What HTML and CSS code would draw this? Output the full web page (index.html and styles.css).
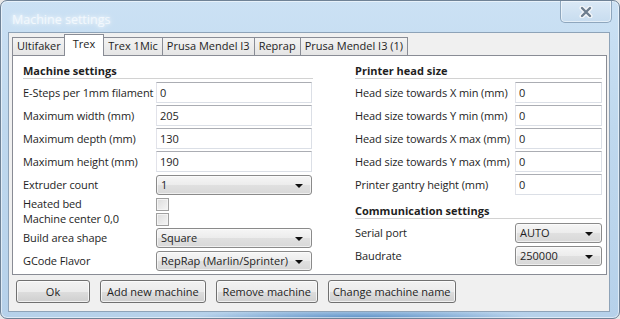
FILE: index.html
```html
<!DOCTYPE html>
<html lang="en">
<head>
    <meta charset="UTF-8">
    <title>Machine settings</title>
    <link rel="stylesheet" href="styles.css">
</head>
<body>
    <div class="window">
        <div class="titlebar">
            <span class="title">Machine settings</span>
            <div class="close-button">
                <svg width="14" height="12" viewBox="0 0 14 12">
                    <path d="M3 2 L11 10 M11 2 L3 10" stroke="#f4f7fa" stroke-width="5" stroke-linecap="round"/>
                    <path d="M3 2 L11 10 M11 2 L3 10" stroke="#6d7d8e" stroke-width="2.4" stroke-linecap="round"/>
                </svg>
            </div>
        </div>

        <div class="client">
            <div class="tabs">
                <div class="tab">Ultifaker</div>
                <div class="tab active">Trex</div>
                <div class="tab">Trex 1Mic</div>
                <div class="tab">Prusa Mendel I3</div>
                <div class="tab">Reprap</div>
                <div class="tab">Prusa Mendel I3 (1)</div>
            </div>

            <div class="panel">
                <div class="column column-left">
                    <div class="section-title">Machine settings</div>
                    <div class="row"><label>E-Steps per 1mm filament</label><input class="field" type="text" value="0"></div>
                    <div class="row"><label>Maximum width (mm)</label><input class="field" type="text" value="205"></div>
                    <div class="row"><label>Maximum depth (mm)</label><input class="field" type="text" value="130"></div>
                    <div class="row"><label>Maximum height (mm)</label><input class="field" type="text" value="190"></div>
                    <div class="row"><label>Extruder count</label><div class="combo">1</div></div>
                    <div class="row row-check"><label>Heated bed</label><span class="checkbox"></span></div>
                    <div class="row row-check"><label>Machine center 0,0</label><span class="checkbox"></span></div>
                    <div class="row"><label>Build area shape</label><div class="combo">Square</div></div>
                    <div class="row"><label>GCode Flavor</label><div class="combo">RepRap (Marlin/Sprinter)</div></div>
                </div>

                <div class="column column-right">
                    <div class="section-title">Printer head size</div>
                    <div class="row"><label>Head size towards X min (mm)</label><input class="field" type="text" value="0"></div>
                    <div class="row"><label>Head size towards Y min (mm)</label><input class="field" type="text" value="0"></div>
                    <div class="row"><label>Head size towards X max (mm)</label><input class="field" type="text" value="0"></div>
                    <div class="row"><label>Head size towards Y max (mm)</label><input class="field" type="text" value="0"></div>
                    <div class="row"><label>Printer gantry height (mm)</label><input class="field" type="text" value="0"></div>

                    <div class="section-title section-second">Communication settings</div>
                    <div class="row"><label>Serial port</label><div class="combo">AUTO</div></div>
                    <div class="row"><label>Baudrate</label><div class="combo">250000</div></div>
                </div>
            </div>

            <div class="buttons">
                <button class="btn btn-ok">Ok</button>
                <button class="btn">Add new machine</button>
                <button class="btn">Remove machine</button>
                <button class="btn btn-narrow">Change machine name</button>
            </div>
        </div>
    </div>
</body>
</html>
```

FILE: styles.css
```css
* {
    margin: 0;
    padding: 0;
    box-sizing: border-box;
}

body {
    font-family: 'Open Sans', 'Noto Sans', sans-serif;
    font-size: 11px;
    color: #1e1e1e;
    background: #e8e8e8;
}

/* window frame */

.window {
    width: 620px;
    height: 319px;
    border: 1px solid #6f8296;
    border-radius: 7px;
    padding: 0 9px 6px 7px;
    background:
        radial-gradient(ellipse 170px 9px at 360px 317px, rgba(30, 100, 175, 0.6), transparent),
        linear-gradient(to bottom, #cbe1f4 0%, #bfd8ee 40%, #b6d1ea 100%);
    box-shadow: inset 0 0 0 1px rgba(255, 255, 255, 0.55);
}

.titlebar {
    height: 31px;
    display: flex;
    justify-content: space-between;
    align-items: flex-start;
}

.title {
    margin: 10px 0 0 4px;
    font-size: 12.5px;
    color: #f2f8fd;
    text-shadow: 0 0 6px #ffffff, 0 0 3px #eaf4fc;
}

.close-button {
    width: 52px;
    height: 22px;
    margin-right: -2px;
    display: flex;
    align-items: center;
    justify-content: center;
    border: 1px solid #8ea6bd;
    border-top: none;
    border-radius: 0 0 5px 5px;
    background: linear-gradient(to bottom, #dbe9f6, #c7dcef);
    box-shadow: inset 0 0 0 1px rgba(255, 255, 255, 0.5);
}

.client {
    height: 280px;
    border: 1px solid #8ea3b8;
    background: #f0f0f0;
    padding: 1px 2px 0 3px;
}

/* tabs */

.tabs {
    height: 21px;
    display: flex;
    align-items: flex-end;
    position: relative;
    z-index: 1;
}

.tab {
    height: 18px;
    line-height: 16px;
    padding: 0 4px;
    border: 1px solid #898c95;
    border-bottom: none;
    margin-right: -1px;
    background: linear-gradient(to bottom, #f3f3f3, #e5e5e5);
    color: #1e1e1e;
    white-space: nowrap;
}

.tab.active {
    height: 22px;
    margin: 0 -1px -1px -1px;
    padding: 1px 8px 0;
    background: #ffffff;
    position: relative;
    z-index: 2;
}

.panel {
    height: 220px;
    border: 1px solid #898c95;
    background: #ffffff;
    padding: 8px 4px 0 10px;
    display: flex;
    gap: 42px;
}

/* form columns */

.column-left {
    width: 290px;
}

.column-right {
    width: 247px;
}

.section-title {
    font-weight: 700;
    line-height: 14px;
    border-bottom: 1px solid #d2d2d2;
    margin-bottom: 3px;
}

.section-second {
    margin-top: 9px;
}

.row {
    display: flex;
    align-items: center;
    height: 21px;
    margin-bottom: 2px;
}

.row label {
    flex: none;
    white-space: nowrap;
    letter-spacing: -0.1px;
}

.column-left .row label {
    width: 133px;
}

.column-right .row label {
    width: 160px;
}

.row-check {
    height: 13px;
}

.row .combo {
    height: 20px;
}

.column-left .field,
.column-left .combo {
    width: 156px;
}

.column-right .field,
.column-right .combo {
    width: 87px;
}

.field {
    height: 21px;
    font: inherit;
    color: #1e1e1e;
    padding: 0 3px;
    border: 1px solid #dbdfe6;
    border-top-color: #abadb3;
    border-left-color: #e2e3ea;
    outline: none;
    background: #ffffff;
}

.combo {
    position: relative;
    line-height: 18px;
    padding: 0 4px;
    border: 1px solid #8a8a8a;
    border-radius: 3px;
    background: linear-gradient(to bottom, #f6f6f6 0%, #ececec 50%, #e0e0e0 51%, #d8d8d8 100%);
    box-shadow: inset 0 0 0 1px rgba(255, 255, 255, 0.6);
}

.combo::after {
    content: '';
    position: absolute;
    right: 8px;
    top: 8px;
    border-left: 4px solid transparent;
    border-right: 4px solid transparent;
    border-top: 4px solid #101010;
}

.checkbox {
    width: 13px;
    height: 13px;
    margin-top: 2px;
    border: 1px solid #a0a0a0;
    background: linear-gradient(135deg, #dcdcdc, #f6f6f6);
    box-shadow: inset 0 0 0 1px #f4f4f4;
}

/* bottom buttons */

.buttons {
    display: flex;
    gap: 10px;
    padding: 5px 0 0 4px;
}

.btn {
    height: 23px;
    padding: 0 6px;
    font: inherit;
    color: #1e1e1e;
    border: 1px solid #707070;
    border-radius: 3px;
    background: linear-gradient(to bottom, #f2f2f2 0%, #ebebeb 50%, #dddddd 51%, #cfcfcf 100%);
    box-shadow: inset 0 0 0 1px rgba(255, 255, 255, 0.7);
}

.btn-ok {
    width: 74px;
}

.btn-narrow {
    padding: 0 4px;
}
```
